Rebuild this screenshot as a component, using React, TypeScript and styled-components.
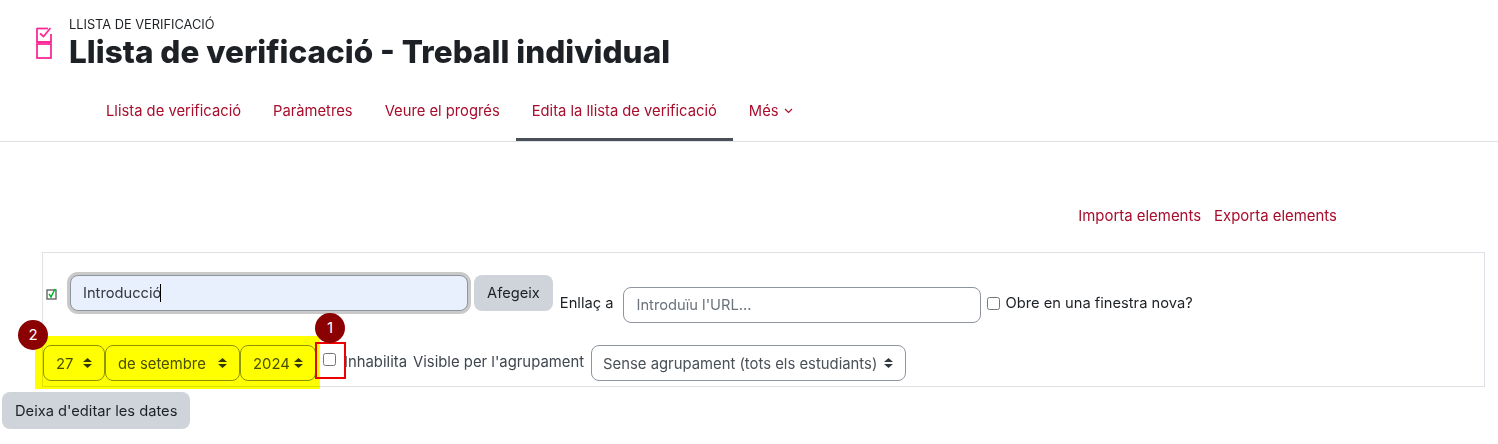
import styled, { createGlobalStyle } from "styled-components";

const chevrons = encodeURIComponent(
    '<svg xmlns="http://www.w3.org/2000/svg" width="9" height="12" viewBox="0 0 9 12"><path fill="#343a40" d="M4.5 1 9 5H0zM4.5 11 0 7h9z"/></svg>'
);

const GlobalStyle = createGlobalStyle`
html, body {
    margin: 0;
    padding: 0;
    background: #fff;
}
body {
    font-family: Inter, "Liberation Sans", sans-serif;
    font-size: 14.7px;
    color: #1d2125;
}
`;

const Page = styled.div`
width: 1498px;
height: 444px;
overflow: hidden;
`;

const Header = styled.header`
display: flex;
align-items: flex-start;
gap: 17px;
padding: 17px 0 0 36px;
`;

const ModuleIcon = styled.svg`
width: 16px;
height: 32px;
margin-top: 10px;
flex: none;
`;

const Caption = styled.div`
font-size: 12.8px;
line-height: 17px;
margin-top: -1px;
color: #1d2125;
`;

const Title = styled.h1`
margin: 0;
font-size: 31.5px;
line-height: 37px;
font-weight: 800;
color: #1d2125;
`;

const Nav = styled.nav`
display: flex;
margin-top: 16px;
padding-left: 90px;
height: 55px;
font-size: 14.75px;
border-bottom: 1px solid #dee2e6;
`;

const NavItem = styled.a<{ $active?: boolean }>`
display: flex;
align-items: center;
gap: 5px;
padding: 0 16px 3px;
color: #a80d2c;
border-bottom: 3px solid ${(p) => (p.$active ? "#495057" : "transparent")};
height: 100%;
box-sizing: border-box;
`;

const Actions = styled.div`
display: flex;
justify-content: flex-end;
gap: 13px;
margin-top: 64px;
padding-right: 161px;
font-size: 14.95px;
line-height: 20px;
color: #a80d2c;
`;

const FormBox = styled.div`
position: relative;
box-sizing: border-box;
width: 1443px;
height: 135px;
margin: 26px 0 0 42px;
border: 1px solid #dee2e6;
`;

const TopRow = styled.div`
display: flex;
align-items: flex-start;
padding: 22px 0 0 3px;
`;

const BottomRow = styled.div`
display: flex;
align-items: flex-start;
margin-top: 22px;
font-size: 14.85px;
color: #3f464d;
`;

const ItemIcon = styled.svg`
width: 12px;
height: 12px;
margin: 13px 12px 0 0;
flex: none;
`;

const ItemName = styled.div`
box-sizing: border-box;
width: 398px;
height: 36px;
padding: 0 12px;
display: flex;
align-items: center;
color: #343a40;
background: #e8f0fe;
border: 1px solid #8f959e;
border-radius: 8px;
box-shadow: 0 0 0 3px #c9c9c9;
`;

const Caret = styled.span`
width: 1px;
height: 18px;
margin-left: -1px;
background: #000;
`;

const Button = styled.button`
box-sizing: border-box;
height: 36px;
padding: 0 13px;
font: inherit;
color: #1d2125;
background: #ced4da;
border: 0;
border-radius: 8px;
`;

const AddButton = styled(Button)`
margin-left: 6px;
`;

const LinkLabel = styled.label`
margin: 18px 9px 0 7px;
line-height: 20px;
`;

const UrlInput = styled.input`
box-sizing: border-box;
width: 358px;
height: 36px;
margin-top: 12px;
padding: 0 13px;
font: inherit;
color: #495057;
border: 1px solid #8f959e;
border-radius: 8px;
outline: 0;
&::placeholder {
    color: #6a737b;
    opacity: 1;
}
`;

const Check = styled.input.attrs({ type: "checkbox" })<{ $gap: number }>`
appearance: none;
box-sizing: border-box;
width: 13px;
height: 13px;
margin: ${(p) => p.$gap}px 6px 0 6px;
background: #fff;
border: 1px solid #767676;
border-radius: 2.5px;
flex: none;
`;

const CheckLabel = styled.label<{ $top: number }>`
margin-top: ${(p) => p.$top}px;
line-height: 20px;
white-space: nowrap;
`;

const Select = styled.select<{ $width: number }>`
appearance: none;
box-sizing: border-box;
width: ${(p) => p.$width}px;
height: 36px;
padding: 2px 12px 0;
font: inherit;
color: #495057;
background: #fff url("data:image/svg+xml,${chevrons}") no-repeat right 12px center;
border: 1px solid #8f959e;
border-radius: 8px;
flex: none;
`;

const GroupSelect = styled(Select)`
margin-left: 7px;
padding-left: 11px;
`;

const DisableCheck = styled(Check)`
margin: 8px 8px 0 7px;
`;

const DisableLabel = styled(CheckLabel)`
margin-right: 6px;
`;

const Highlight = styled.div`
position: absolute;
left: -8px;
top: 83px;
width: 285px;
height: 53px;
background: #ff0;
mix-blend-mode: multiply;
`;

const RedBox = styled.div`
position: absolute;
left: 272px;
top: 89px;
box-sizing: border-box;
width: 31px;
height: 37px;
border: 2px solid #ee0000;
`;

const Badge = styled.div<{ $left: number; $top: number }>`
position: absolute;
left: ${(p) => p.$left}px;
top: ${(p) => p.$top}px;
width: 30px;
height: 30px;
border-radius: 50%;
background: #8b0000;
color: #fff;
font-size: 15px;
line-height: 30px;
text-align: center;
`;

const Footer = styled.div`
margin: 5px 0 0 2px;
`;

const FooterButton = styled(Button)`
height: 37px;
`;

export default function App() {
    return (
        <Page>
            <GlobalStyle />
            <Header>
                <ModuleIcon viewBox="0 0 16 32" fill="none" stroke="#fb2a98" strokeWidth="1.8">
                    <path d="M1 1.5h11" />
                    <path d="M1 1v14h14V7" />
                    <path d="M4 6.5l3.5 3L14.5 1" />
                    <rect x="1" y="17" width="14" height="14" />
                </ModuleIcon>
                <div>
                    <Caption>LLISTA DE VERIFICACIÓ</Caption>
                    <Title>Llista de verificació - Treball individual</Title>
                </div>
            </Header>
            <Nav>
                <NavItem>Llista de verificació</NavItem>
                <NavItem>Paràmetres</NavItem>
                <NavItem>Veure el progrés</NavItem>
                <NavItem $active>Edita la llista de verificació</NavItem>
                <NavItem>
                    Més
                    <svg width="9" height="6" viewBox="0 0 9 6" fill="none" stroke="#a80d2c" strokeWidth="1.2">
                        <path d="M1 1l3.5 3.5L8 1" />
                    </svg>
                </NavItem>
            </Nav>
            <Actions>
                <a>Importa elements</a>
                <a>Exporta elements</a>
            </Actions>
            <FormBox>
                <TopRow>
                    <ItemIcon viewBox="0 0 12 12" fill="none">
                        <rect x="1" y="2" width="9" height="9" stroke="#666" strokeWidth="1.4" />
                        <path d="M3 6l2 3 4-8" stroke="#00b828" strokeWidth="1.5" />
                    </ItemIcon>
                    <ItemName>
                        Introducció
                        <Caret />
                    </ItemName>
                    <AddButton>Afegeix</AddButton>
                    <LinkLabel>Enllaç a</LinkLabel>
                    <UrlInput placeholder="Introduïu l'URL..." />
                    <Check $gap={22} />
                    <CheckLabel $top={18}>Obre en una finestra nova?</CheckLabel>
                </TopRow>
                <BottomRow>
                    <Select $width={62} defaultValue="27">
                        <option>27</option>
                    </Select>
                    <Select $width={135} defaultValue="de setembre">
                        <option>de setembre</option>
                    </Select>
                    <Select $width={76} defaultValue="2024">
                        <option>2024</option>
                    </Select>
                    <DisableCheck $gap={8} />
                    <DisableLabel $top={7}>Inhabilita</DisableLabel>
                    <CheckLabel $top={7}>Visible per l'agrupament</CheckLabel>
                    <GroupSelect $width={315} defaultValue="all">
                        <option value="all">Sense agrupament (tots els estudiants)</option>
                    </GroupSelect>
                </BottomRow>
                <Highlight />
                <RedBox />
                <Badge $left={272} $top={60}>1</Badge>
                <Badge $left={-25} $top={67}>2</Badge>
            </FormBox>
            <Footer>
                <FooterButton>Deixa d'editar les dates</FooterButton>
            </Footer>
        </Page>
    );
}
